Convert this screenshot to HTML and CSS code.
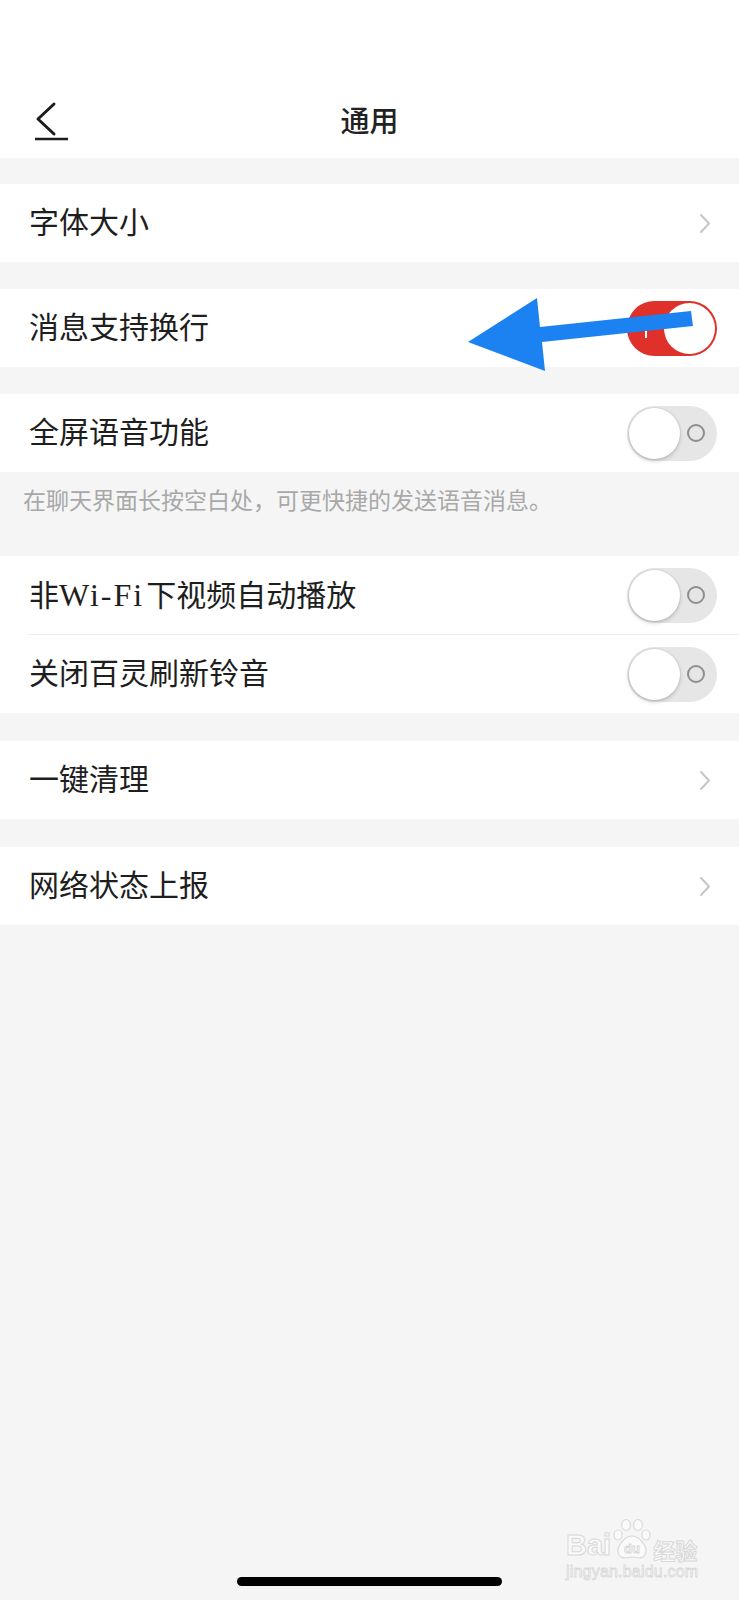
FILE: index.html
```html
<!DOCTYPE html>
<html lang="zh-CN">
<head>
  <meta charset="UTF-8">
  <meta name="viewport" content="width=device-width, initial-scale=1.0">
  <title>通用</title>
  <link rel="stylesheet" href="styles.css">
</head>
<body>
  <div class="page">
    <header class="header">
      <div class="nav">
        <span class="back">
          <svg width="36" height="44" viewBox="0 0 36 44">
            <polyline points="20,7 4,22 20,37" fill="none" stroke="#1c1c1c" stroke-width="3" stroke-linecap="round" stroke-linejoin="round"/>
            <line x1="1" y1="42" x2="34" y2="42" stroke="#1c1c1c" stroke-width="2.6"/>
          </svg>
        </span>
        <h1 class="title">通用</h1>
        <span></span>
      </div>
    </header>

    <section class="group first">
      <div class="row">
        <span class="label">字体大小</span>
        <svg class="chevron" width="14" height="22" viewBox="0 0 14 22">
          <polyline points="3,3 11,11.5 3,20" fill="none" stroke="#c6c6c6" stroke-width="2" stroke-linecap="round" stroke-linejoin="round"/>
        </svg>
      </div>
    </section>

    <section class="group">
      <div class="row">
        <span class="label">消息支持换行</span>
        <span class="switch on"><i class="mark"></i><i class="knob"></i></span>
      </div>
    </section>

    <section class="group">
      <div class="row">
        <span class="label">全屏语音功能</span>
        <span class="switch"><i class="knob"></i><i class="ring"></i></span>
      </div>
    </section>
    <p class="note">在聊天界面长按空白处，可更快捷的发送语音消息。</p>

    <section class="group flush">
      <div class="row">
        <span class="label">非<span class="latin">Wi-Fi</span>下视频自动播放</span>
        <span class="switch"><i class="knob"></i><i class="ring"></i></span>
      </div>
      <div class="divider"></div>
      <div class="row">
        <span class="label">关闭百灵刷新铃音</span>
        <span class="switch"><i class="knob"></i><i class="ring"></i></span>
      </div>
    </section>

    <section class="group wide">
      <div class="row">
        <span class="label">一键清理</span>
        <svg class="chevron" width="14" height="22" viewBox="0 0 14 22">
          <polyline points="3,3 11,11.5 3,20" fill="none" stroke="#c6c6c6" stroke-width="2" stroke-linecap="round" stroke-linejoin="round"/>
        </svg>
      </div>
    </section>

    <section class="group wide">
      <div class="row">
        <span class="label">网络状态上报</span>
        <svg class="chevron" width="14" height="22" viewBox="0 0 14 22">
          <polyline points="3,3 11,11.5 3,20" fill="none" stroke="#c6c6c6" stroke-width="2" stroke-linecap="round" stroke-linejoin="round"/>
        </svg>
      </div>
    </section>

    <div class="home-bar"></div>

    <!-- annotation arrow drawn over the screenshot -->
    <svg class="arrow" width="739" height="400" viewBox="0 0 739 400">
      <polygon points="468,342 537,298 540,327 691,311 693,326 542,342 545,371" fill="#1c82f2"/>
    </svg>

    <div class="watermark">
      <div class="wm-top">
        <span class="wm-bai">Bai</span>
        <svg class="wm-paw" width="40" height="42" viewBox="0 0 40 42">
          <g fill="#fafafa" stroke="#dadada" stroke-width="1.2">
            <ellipse cx="6" cy="17" rx="4" ry="5"/>
            <ellipse cx="14" cy="7" rx="4.5" ry="5.5"/>
            <ellipse cx="26" cy="7" rx="4.5" ry="5.5"/>
            <ellipse cx="34" cy="17" rx="4" ry="5"/>
            <path d="M20 18 C28 18 37 30 33 37 C30 42 24 39 20 39 C16 39 10 42 7 37 C3 30 12 18 20 18 Z"/>
          </g>
          <text x="20" y="35" text-anchor="middle" class="wm-du">du</text>
        </svg>
        <span class="wm-jy">经验</span>
      </div>
      <div class="wm-url">jingyan.baidu.com</div>
    </div>
  </div>
</body>
</html>
```

FILE: styles.css
```css
body {
  margin: 0;
  font-family: "Liberation Serif", "Noto Sans CJK SC", sans-serif;
  color: #1e1e1e;
}
.page {
  position: relative;
  min-height: 1600px;
  box-sizing: border-box;
  display: flex;
  flex-direction: column;
  background-color: #f5f5f5;
  overflow: hidden;
}
.header {
  background-color: #fff;
  padding-top: 80px;
}
.nav {
  height: 78px;
  display: grid;
  grid-template-columns: 1fr auto 1fr;
  align-items: center;
}
.back {
  display: flex;
  padding-left: 34px;
}
.title {
  margin: 0;
  font-family: "Noto Sans CJK SC", sans-serif;
  font-size: 29px;
  font-weight: 500;
  color: #222;
  line-height: 1;
}
.group {
  margin-top: 27px;
  background-color: #fff;
}
.group.first {
  margin-top: 26px;
}
.group.wide {
  margin-top: 28px;
}
.note + .group {
  margin-top: 0;
}
.row {
  height: 78px;
  display: flex;
  align-items: center;
  justify-content: space-between;
  padding: 0 22px 0 29px;
}
.label {
  font-size: 30px;
  line-height: 1;
}
.latin {
  font-size: 32px;
  letter-spacing: 2px;
  margin-right: 2px;
}
.chevron {
  margin-right: 5px;
}
.divider {
  height: 1px;
  margin-left: 28px;
  background-color: #ececec;
}
.note {
  margin: 0;
  height: 84px;
  box-sizing: border-box;
  padding: 15px 22px 0 23px;
  font-size: 23px;
  line-height: 30px;
  color: #a8a8a8;
}
.switch {
  width: 90px;
  height: 55px;
  box-sizing: border-box;
  border-radius: 28px;
  display: flex;
  align-items: center;
  justify-content: space-between;
  padding: 2px 12px 2px 2px;
  background-color: #e6e6e6;
}
.switch.on {
  background-color: #e0302a;
  padding: 2px 2px 2px 18px;
}
.knob {
  width: 51px;
  height: 51px;
  border-radius: 50%;
  background-color: #fff;
  box-shadow: 0 2px 4px rgba(0, 0, 0, 0.18), 0 0 0 1px rgba(0, 0, 0, 0.05);
}
.switch.on .knob {
  box-shadow: none;
}
.ring {
  width: 14px;
  height: 14px;
  border: 2px solid #8e8e8e;
  border-radius: 50%;
}
.mark {
  width: 2px;
  height: 19px;
  background-color: #fff;
}
.home-bar {
  margin: auto auto 14px;
  width: 265px;
  height: 9px;
  border-radius: 5px;
  background-color: #000;
}
.arrow {
  position: absolute;
  top: 0;
  left: 0;
  pointer-events: none;
}
.watermark {
  position: absolute;
  left: 566px;
  top: 1518px;
  color: #fafafa;
  font-family: "Liberation Sans", sans-serif;
}
.wm-top {
  display: flex;
  align-items: flex-end;
}
.wm-bai {
  font-size: 29px;
  font-weight: bold;
  line-height: 1;
  -webkit-text-stroke: 1px #d8d8d8;
}
.wm-paw {
  margin: 0 1px;
}
.wm-du {
  font-family: "Liberation Sans", sans-serif;
  font-size: 13px;
  font-weight: bold;
  fill: #fafafa;
  stroke: #d4d4d4;
  stroke-width: 0.8;
}
.wm-jy {
  font-family: "Noto Sans CJK SC", sans-serif;
  font-size: 22px;
  font-weight: bold;
  line-height: 1;
  -webkit-text-stroke: 1px #d8d8d8;
}
.wm-url {
  margin-top: 4px;
  font-size: 16px;
  line-height: 1;
  letter-spacing: 0.2px;
  -webkit-text-stroke: 0.8px #d8d8d8;
}
```
